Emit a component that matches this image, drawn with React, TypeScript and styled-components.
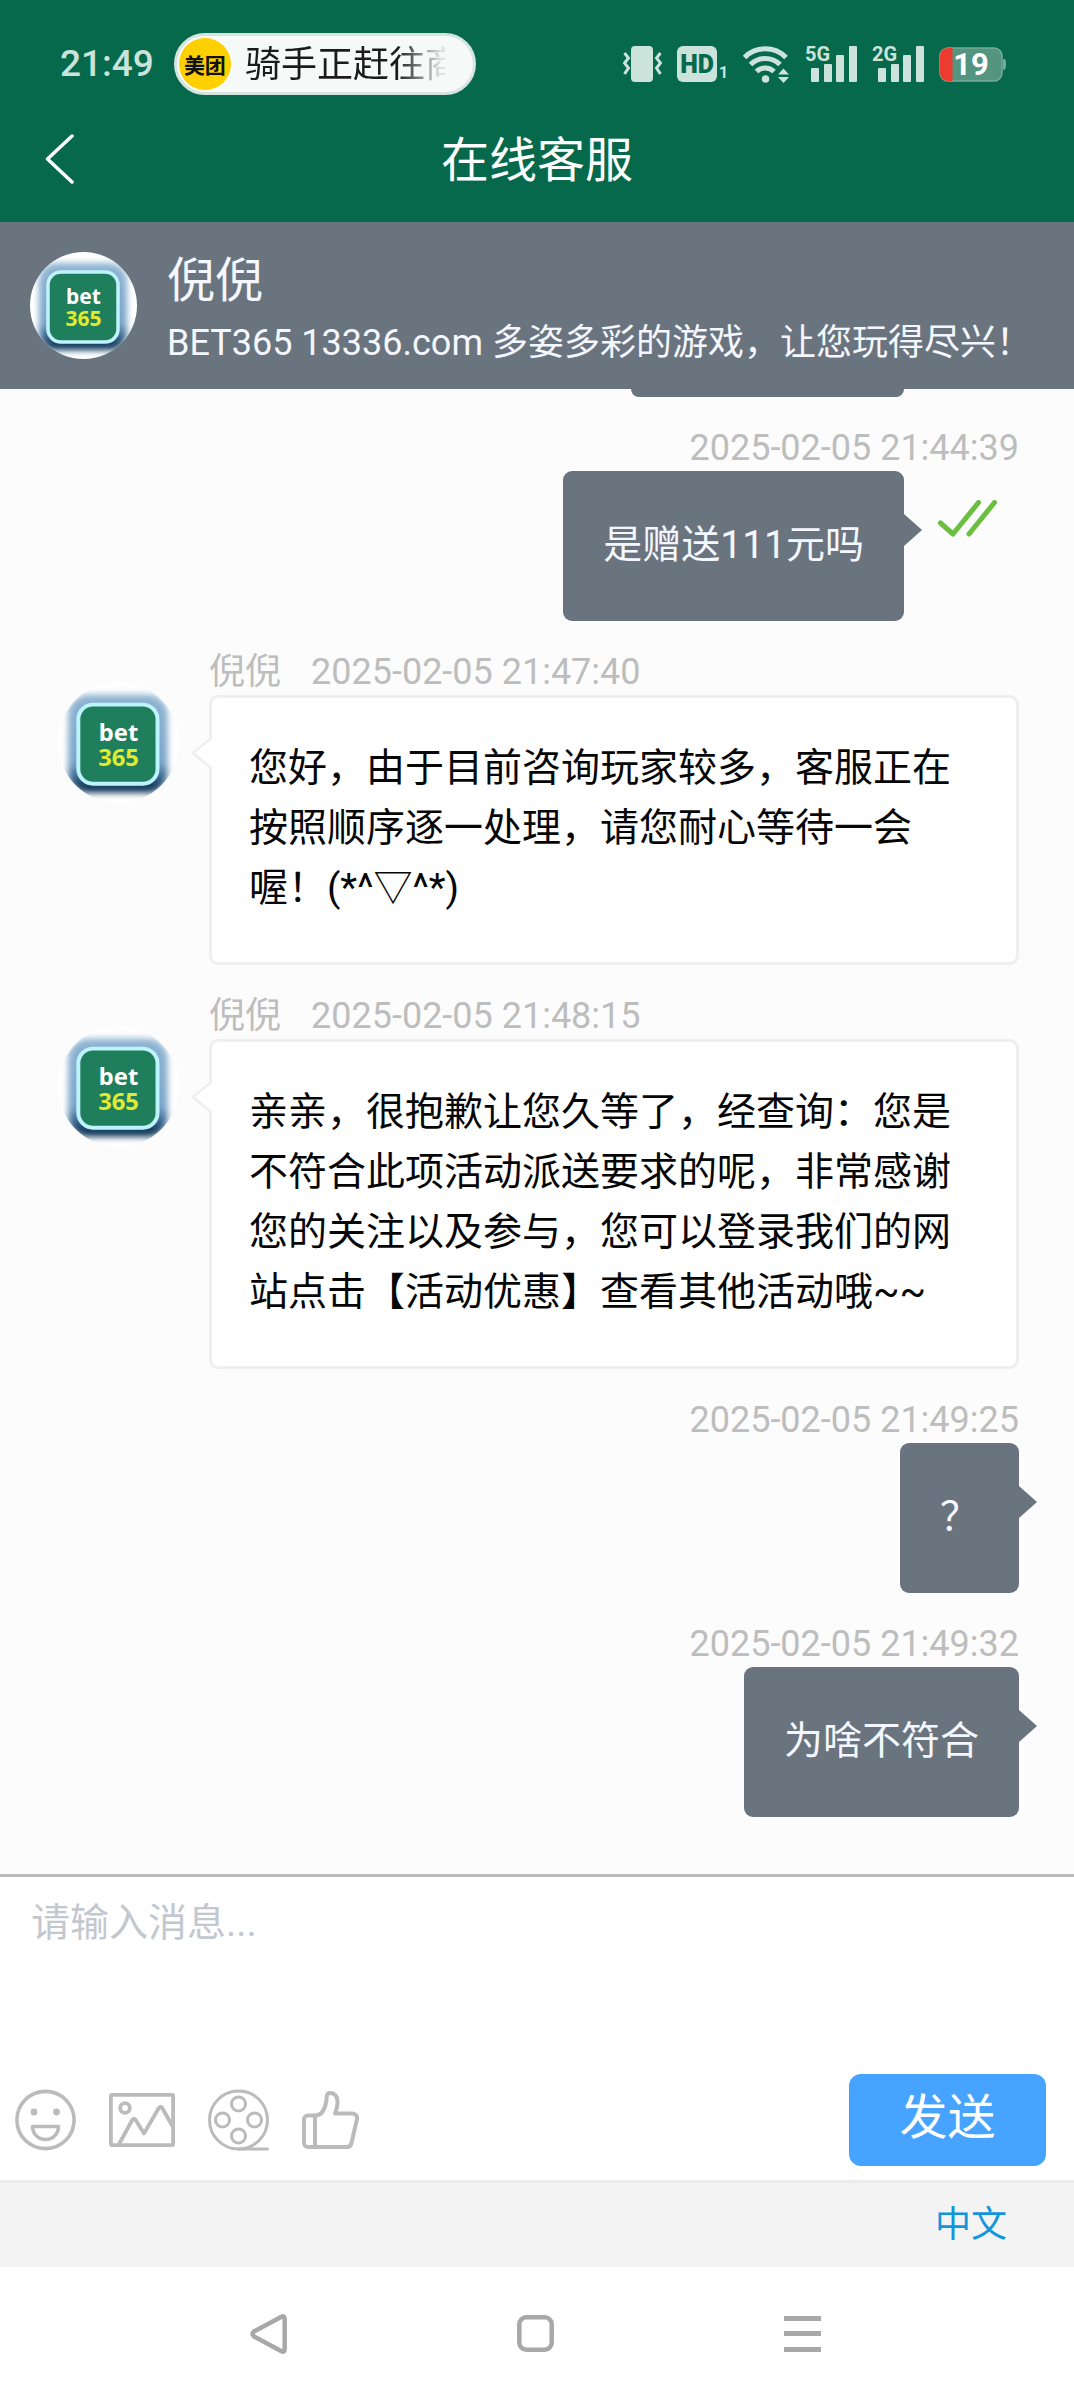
import React from 'react';
import styled, { createGlobalStyle } from 'styled-components';

const SLATE = '#6a747e';
const GREEN = '#06694c';
const MINT = '#cbe3da';
const ICON_GREY = '#bbbbbb';

const GlobalStyle = createGlobalStyle`
  * { box-sizing: border-box; }
  body {
    margin: 0;
    background: #fff;
    font-family: Roboto, "Noto Sans CJK SC", sans-serif;
  }
  button, textarea { font: inherit; }
  button { border: 0; padding: 0; background: none; cursor: pointer; }
  svg { display: block; }
`;

const Page = styled.div`
  min-height: 100vh;
  display: flex;
  flex-direction: column;
`;

/* ---------- top ---------- */
const TopArea = styled.header`
  background: ${GREEN};
`;

const StatusBar = styled.div`
  display: flex;
  align-items: center;
  justify-content: space-between;
  height: 96px;
  padding: 32px 68px 0 60px;
`;

const StatusGroup = styled.div<{ $gap: number }>`
  display: flex;
  align-items: center;
  gap: ${(p) => p.$gap}px;
`;

const Clock = styled.time`
  color: ${MINT};
  font-size: 37px;
  font-weight: 500;
  line-height: 48px;
`;

const Pill = styled.div`
  display: flex;
  align-items: center;
  width: 302px;
  height: 62px;
  padding: 0 28px 0 2px;
  border: 3px solid #d5e4de;
  border-radius: 31px;
  background: #f5f9f8;
`;

const Brand = styled.span`
  flex: none;
  display: grid;
  place-items: center;
  width: 52px;
  height: 52px;
  border-radius: 50%;
  background: #ffd000;
  color: #111;
  font-size: 21px;
  font-weight: 700;
`;

const PillText = styled.span`
  margin-left: 14px;
  padding-top: 2px;
  overflow: hidden;
  white-space: nowrap;
  font-size: 36px;
  font-weight: 400;
  line-height: 52px;
  color: transparent;
  background: linear-gradient(90deg, #1b1b1b 76%, rgba(27, 27, 27, 0.1) 98%);
  background-clip: text;
  -webkit-background-clip: text;
`;

const TitleBar = styled.div`
  display: grid;
  grid-template-columns: 120px 1fr 120px;
  align-items: center;
  height: 126px;
`;

const BackButton = styled.button`
  padding-left: 45px;
`;

const Title = styled.h1`
  margin: 0;
  padding-top: 4px;
  text-align: center;
  color: #fff;
  font-size: 48px;
  font-weight: 400;
  line-height: 64px;
`;

/* ---------- agent ---------- */
const AgentBar = styled.section`
  display: flex;
  align-items: center;
  gap: 30px;
  height: 167px;
  padding: 0 30px;
  background: ${SLATE};
  color: #f4f7ff;
`;

const AgentText = styled.div`
  padding-top: 12px;
`;

const AgentName = styled.h2`
  margin: 0;
  font-size: 48px;
  font-weight: 400;
  line-height: 62px;
`;

const AgentNote = styled.p`
  margin: 0;
  font-size: 36px;
  line-height: 62px;
  white-space: nowrap;
`;

/* ---------- messages ---------- */
const Chat = styled.main`
  flex: 1;
  display: flex;
  flex-direction: column;
  gap: 28px;
  padding-bottom: 57px;
  background: #fcfcfc;
`;

const EarlierBubble = styled.div`
  align-self: flex-end;
  width: 273px;
  height: 8px;
  margin-right: 170px;
  border-radius: 0 0 9px 9px;
  background: ${SLATE};
`;

const SentRow = styled.article`
  display: flex;
  flex-direction: column;
  align-items: flex-end;
  padding-right: 55px;
`;

const Meta = styled.div`
  display: flex;
  gap: 30px;
  color: #bdbdbd;
  font-size: 36px;
  line-height: 46px;
`;

const BubbleLine = styled.div`
  display: flex;
  align-items: flex-start;
`;

const SentBubble = styled.div`
  position: relative;
  padding: 44px 40px 46px;
  border-radius: 9px;
  background: ${SLATE};
  color: #f4f7ff;
  font-size: 39px;
  line-height: 60px;

  &::after {
    content: "";
    position: absolute;
    left: 100%;
    top: 43px;
    border: 16px solid transparent;
    border-left: 18px solid ${SLATE};
    border-right: 0;
  }
`;

const ReadMark = styled.span`
  padding: 29px 22px 0 34px;
`;

const ReceivedRow = styled.article`
  display: flex;
  align-items: flex-start;
  padding: 0 55px 0 58px;
`;

const AvatarSlot = styled.div`
  flex: none;
  margin: 33px 30px 0 0;
`;

const ReceivedBody = styled.div`
  flex: 1;
  min-width: 0;
`;

const ReceivedBubble = styled.div`
  position: relative;
  padding: 40px 37px 44px;
  border: 3px solid #efefef;
  border-radius: 9px;
  background: #fff;
  color: #060606;
  font-size: 39px;
  line-height: 60px;

  &::before, &::after {
    content: "";
    position: absolute;
    right: 100%;
    top: 38px;
    border: 17px solid transparent;
    border-right: 21px solid #efefef;
    border-left: 0;
  }
  &::after {
    top: 41px;
    border-width: 14px 17px 14px 0;
    border-right-color: #fff;
  }
`;

/* ---------- composer ---------- */
const Composer = styled.form`
  display: flex;
  flex-direction: column;
  border-top: 3px solid #bdbdbd;
  background: #fff;
`;

const MessageInput = styled.textarea`
  display: block;
  width: 100%;
  height: 197px;
  padding: 16px 31px;
  border: 0;
  outline: 0;
  resize: none;
  background: transparent;
  font-size: 39px;
  line-height: 60px;
  &::placeholder { color: #c3c7cf; opacity: 1; }
`;

const Toolbar = styled.div`
  display: flex;
  align-items: center;
  gap: 33px;
  padding: 0 28px 14px 15px;
`;

const SendButton = styled.button`
  width: 197px;
  height: 92px;
  margin-left: auto;
  padding-bottom: 4px;
  border-radius: 12px;
  background: #46a3ff;
  color: #fff;
  font-size: 48px;
  line-height: 64px;
`;

const LanguageBar = styled.div`
  display: flex;
  justify-content: flex-end;
  align-items: center;
  height: 87px;
  padding-right: 67px;
  border-top: 3px solid #ececec;
  background: #f3f3f3;
`;

const LanguageLink = styled.a`
  color: #1296db;
  font-size: 36px;
  line-height: 60px;
  text-decoration: none;
`;

const SystemNav = styled.nav`
  display: flex;
  justify-content: center;
  align-items: center;
  gap: 230px;
  height: 133px;
  padding-right: 4px;
  background: #fff;
`;

/* ---------- drawings ---------- */
const Avatar = ({ size, id }: { size: number; id: string }) => (
  <svg width={size} height={size} viewBox="0 0 107 107" role="img" aria-label="bet365">
    <defs>
      <clipPath id={`${id}-round`}><circle cx="53.5" cy="53.5" r="53.5" /></clipPath>
      <filter id={`${id}-soft`} x="-30%" y="-30%" width="160%" height="160%">
        <feGaussianBlur stdDeviation="3" />
      </filter>
      <linearGradient id={`${id}-glow`} x1="0" y1="0" x2="0" y2="1">
        <stop offset="0" stopColor="#8fb4d2" />
        <stop offset="0.7" stopColor="#7aa5c9" />
        <stop offset="0.86" stopColor="#2f5e86" />
        <stop offset="0.94" stopColor="#0f3556" />
      </linearGradient>
    </defs>
    <g clipPath={`url(#${id}-round)`}>
      <rect width="107" height="107" fill="#fff" />
      <rect x="9" y="11" width="88" height="87" rx="18" fill={`url(#${id}-glow)`} filter={`url(#${id}-soft)`} />
      <rect x="18" y="20" width="70" height="70" rx="13" fill="#1f7e5c" stroke="#bff3fb" strokeWidth="3.500" />
      <text x="53.5" y="52" textAnchor="middle" fontFamily="Noto Sans, sans-serif" fontWeight="700" fontSize="21" fill="#fff">bet</text>
      <text x="53.5" y="74" textAnchor="middle" fontFamily="Noto Sans, sans-serif" fontWeight="700" fontSize="21" fill="#e2ea2e">365</text>
    </g>
  </svg>
);

const VibrateIcon = () => (
  <svg width="39" height="36" viewBox="0 0 39 36" fill="none" stroke={MINT} strokeWidth="3">
    <rect x="8" y="0" width="22" height="36" rx="4" fill={MINT} stroke="none" />
    <path d="M1.500 7l4 5-4 5 4 5-4 6M37.500 7l-4 5 4 5-4 5 4 6" />
  </svg>
);

const HdIcon = () => (
  <svg width="51" height="36" viewBox="0 0 51 36" fontFamily="Roboto, sans-serif">
    <rect width="40" height="36" rx="6" fill={MINT} />
    <text x="20" y="27" textAnchor="middle" fontSize="25" fontWeight="900" fill={GREEN}>HD</text>
    <text x="42" y="32" fontSize="16" fontWeight="700" fill={MINT}>1</text>
  </svg>
);

const WifiIcon = () => (
  <svg width="47" height="37" viewBox="0 0 47 37" fill="none" stroke={MINT} strokeWidth="5">
    <path d="M1.500 11.500a29 29 0 0 1 41.500 0M7.500 18.500a21 21 0 0 1 29.500 0M13.500 25.500a12.500 12.500 0 0 1 17.500 0" />
    <circle cx="22.500" cy="33" r="3.800" fill={MINT} stroke="none" />
    <path d="M35 28.500l5.500-6 5.500 6zM35 31l5.500 6 5.500-6z" fill={MINT} stroke="none" />
  </svg>
);

const SignalIcon = ({ label }: { label: string }) => (
  <svg width="52" height="40" viewBox="0 0 52 40" fill={MINT}>
    <text x="0" y="17" fontSize="20" fontWeight="700" fontFamily="Roboto, sans-serif">{label}</text>
    <rect x="6" y="24" width="8" height="14" rx="1" />
    <rect x="19" y="20" width="8" height="18" rx="1" />
    <rect x="31" y="11" width="8" height="27" rx="1" />
    <rect x="44" y="2" width="8" height="36" rx="1" />
  </svg>
);

const BatteryIcon = () => (
  <svg width="67" height="35" viewBox="0 0 67 35">
    <rect x="1" y="1" width="62" height="33" rx="8" fill="#53957f" stroke="#75ac99" strokeWidth="1.500" />
    <path d="M64 12c3 0 3 2 3 5s0 6-3 6z" fill="#75ac99" />
    <path d="M13.500 1H9a8 8 0 0 0-8 8v17a8 8 0 0 0 8 8h4.500z" fill="#ee3b2f" />
    <text x="32" y="28" textAnchor="middle" fontSize="31" fontWeight="700" fill="#fff" fontFamily="Roboto, sans-serif">19</text>
  </svg>
);

const DoubleCheck = () => (
  <svg width="59" height="37" viewBox="0 0 59 37" fill="none" stroke="#6bbf40" strokeWidth="5" strokeLinecap="round" strokeLinejoin="round">
    <path d="M2.500 23L15 34 40.500 2.500M31 34L56.500 2.500" />
  </svg>
);

const SmileIcon = () => (
  <svg width="61" height="62" viewBox="0 0 61 62" fill="none" stroke={ICON_GREY} strokeWidth="3.600">
    <circle cx="30.500" cy="31" r="28.600" />
    <circle cx="19" cy="23" r="3.400" fill={ICON_GREY} stroke="none" />
    <circle cx="41.500" cy="23" r="3.400" fill={ICON_GREY} stroke="none" />
    <path d="M17.500 37.500h26a13 13 0 0 1-26 0z" strokeLinejoin="round" />
  </svg>
);

const PictureIcon = () => (
  <svg width="66" height="54" viewBox="0 0 66 54" fill="none" stroke={ICON_GREY} strokeWidth="3.800" strokeLinejoin="round">
    <rect x="1.900" y="1.900" width="62.200" height="50.200" rx="1" />
    <circle cx="16" cy="15" r="4.800" />
    <path d="M9.500 52L23 27.500q2-3.500 4 0L35 40.500 49.500 15.500q2-3.500 4 0L64 34" />
  </svg>
);

const FilmIcon = () => (
  <svg width="61" height="62" viewBox="0 0 61 62" fill="none" stroke={ICON_GREY} strokeWidth="3">
    <circle cx="30.500" cy="31" r="29" />
    <circle cx="30.500" cy="15" r="7" />
    <circle cx="30.500" cy="47" r="7" />
    <circle cx="14.500" cy="31" r="7" />
    <circle cx="46.500" cy="31" r="7" />
    <path d="M30.500 60h29" strokeLinecap="round" />
  </svg>
);

const ThumbIcon = () => (
  <svg width="57" height="58" viewBox="0 0 57 58" fill="none" stroke={ICON_GREY} strokeWidth="4" strokeLinejoin="round" strokeLinecap="round">
    <path d="M13 24.500H6a4 4 0 0 0-4 4V52a4 4 0 0 0 4 4h38.500a5 5 0 0 0 5-4L55 28q.500-5-5-5.500H33q3-7 2.500-12.500C35 4 32 2 28 2c-2 0-3 1-3.200 3C24 17 21 24.500 13 24.500zM13 24.500V56" />
  </svg>
);

/* ---------- data ---------- */
const AGENT = '倪倪';

const IconButton = styled.button`
  flex: none;
`;

function Sent({ time, text, read }: { time: string; text: string; read?: boolean }) {
  return (
    <SentRow>
      <Meta><time>{time}</time></Meta>
      <BubbleLine>
        <SentBubble>{text}</SentBubble>
        {read && <ReadMark><DoubleCheck /></ReadMark>}
      </BubbleLine>
    </SentRow>
  );
}

function Received({ id, time, text }: { id: string; time: string; text: string }) {
  return (
    <ReceivedRow>
      <AvatarSlot><Avatar size={121} id={id} /></AvatarSlot>
      <ReceivedBody>
        <Meta><span>{AGENT}</span><time>{time}</time></Meta>
        <ReceivedBubble>{text}</ReceivedBubble>
      </ReceivedBody>
    </ReceivedRow>
  );
}

export default function App() {
  return (
    <Page>
      <GlobalStyle />
      <TopArea>
        <StatusBar>
          <StatusGroup $gap={20}>
            <Clock>21:49</Clock>
            <Pill>
              <Brand>美团</Brand>
              <PillText>骑手正赶往商</PillText>
            </Pill>
          </StatusGroup>
          <StatusGroup $gap={15}>
            <VibrateIcon />
            <HdIcon />
            <WifiIcon />
            <SignalIcon label="5G" />
            <SignalIcon label="2G" />
            <BatteryIcon />
          </StatusGroup>
        </StatusBar>
        <TitleBar>
          <BackButton type="button" aria-label="返回">
            <svg width="29" height="50" viewBox="0 0 29 50" fill="none" stroke="#fff" strokeWidth="3.500" strokeLinecap="round" strokeLinejoin="round">
              <path d="M27 2L2.500 25 27 48" />
            </svg>
          </BackButton>
          <Title>在线客服</Title>
        </TitleBar>
      </TopArea>

      <AgentBar>
        <Avatar size={107} id="agent" />
        <AgentText>
          <AgentName>{AGENT}</AgentName>
          <AgentNote>BET365 13336.com 多姿多彩的游戏，让您玩得尽兴！</AgentNote>
        </AgentText>
      </AgentBar>

      <Chat>
        <EarlierBubble />
        <Sent time="2025-02-05 21:44:39" text="是赠送111元吗" read />
        <Received id="m1" time="2025-02-05 21:47:40" text="您好，由于目前咨询玩家较多，客服正在按照顺序逐一处理，请您耐心等待一会喔！(*^▽^*)" />
        <Received id="m2" time="2025-02-05 21:48:15" text="亲亲，很抱歉让您久等了，经查询：您是不符合此项活动派送要求的呢，非常感谢您的关注以及参与，您可以登录我们的网站点击【活动优惠】查看其他活动哦~~" />
        <Sent time="2025-02-05 21:49:25" text="？" />
        <Sent time="2025-02-05 21:49:32" text="为啥不符合" />
      </Chat>

      <Composer onSubmit={(e) => e.preventDefault()}>
        <MessageInput aria-label="消息" placeholder="请输入消息..." />
        <Toolbar>
          <IconButton type="button" aria-label="表情"><SmileIcon /></IconButton>
          <IconButton type="button" aria-label="图片"><PictureIcon /></IconButton>
          <IconButton type="button" aria-label="视频"><FilmIcon /></IconButton>
          <IconButton type="button" aria-label="评价"><ThumbIcon /></IconButton>
          <SendButton type="submit">发送</SendButton>
        </Toolbar>
      </Composer>

      <LanguageBar>
        <LanguageLink href="#lang">中文</LanguageLink>
      </LanguageBar>

      <SystemNav>
        <IconButton type="button" aria-label="后退">
          <svg width="37" height="40" viewBox="0 0 37 40" fill="none" stroke="#a8a8a8" strokeWidth="4.500" strokeLinejoin="round">
            <path d="M31 3Q34.700 1 34.700 5V35Q34.700 39 31 37L4 22.500Q1 20 4 17.500Z" />
          </svg>
        </IconButton>
        <IconButton type="button" aria-label="主屏幕">
          <svg width="37" height="37" viewBox="0 0 37 37" fill="none" stroke="#a8a8a8" strokeWidth="4.500">
            <rect x="2.300" y="2.300" width="32.400" height="32.400" rx="7" />
          </svg>
        </IconButton>
        <IconButton type="button" aria-label="最近任务">
          <svg width="37" height="36" viewBox="0 0 37 36" fill="#a8a8a8">
            <rect width="37" height="5" />
            <rect y="15" width="37" height="5" />
            <rect y="31" width="37" height="5" />
          </svg>
        </IconButton>
      </SystemNav>
    </Page>
  );
}
